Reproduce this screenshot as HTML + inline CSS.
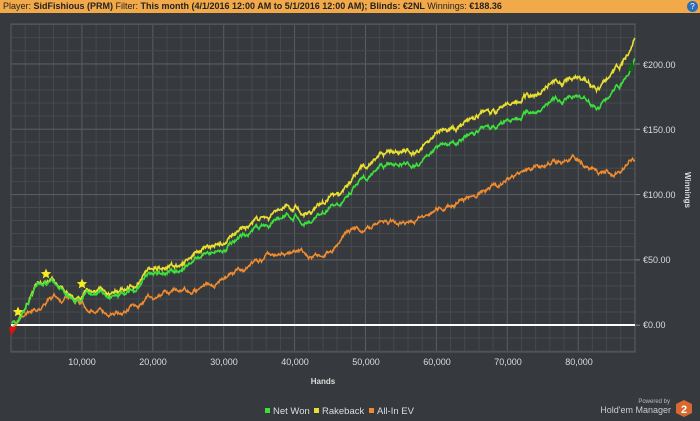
<!DOCTYPE html><html><head><meta charset="utf-8"><style>
body{margin:0;width:700px;height:421px;background:#36393d;overflow:hidden;font-family:"Liberation Sans",sans-serif}
.top{position:absolute;left:0;top:0;width:700px;height:13px;background:#f2a94a;font-size:9px;line-height:13px;color:#222;padding-left:3px;font-weight:bold;white-space:nowrap}
.top span{font-weight:normal}
.q{position:absolute;right:2px;top:1px;width:11px;height:11px;border-radius:50%;background:#2a6fb8;color:#fff;font-size:8px;text-align:center;line-height:11px}
</style></head><body>
<div class="top"><span>Player:</span> SidFishious (PRM) <span>Filter:</span> This month (4/1/2016 12:00 AM to 5/1/2016 12:00 AM); Blinds: €2NL <span>Winnings:</span> €188.36</div>
<div class="q">?</div>
<svg width="700" height="421" style="position:absolute;left:0;top:0" id="s" font-family="Liberation Sans,sans-serif">
<g id="grid"></g>
<g font-size="9" fill="#ddd">
<text x="643" y="68">€200.00</text><text x="643" y="133">€150.00</text><text x="643" y="198">€100.00</text><text x="643" y="263">€50.00</text><text x="643" y="328">€0.00</text>
<text x="82" y="365" text-anchor="middle">10,000</text><text x="153" y="365" text-anchor="middle">20,000</text><text x="224" y="365" text-anchor="middle">30,000</text><text x="295" y="365" text-anchor="middle">40,000</text><text x="366" y="365" text-anchor="middle">50,000</text><text x="437" y="365" text-anchor="middle">60,000</text><text x="508" y="365" text-anchor="middle">70,000</text><text x="579" y="365" text-anchor="middle">80,000</text>
<text x="323" y="384" text-anchor="middle" font-weight="bold" font-size="8">Hands</text>
<text x="685" y="190" font-weight="bold" font-size="8" transform="rotate(90 685 190)" text-anchor="middle">Winnings</text>
<rect x="265" y="408" width="5" height="5" fill="#3ce03c"/><text x="273" y="414" font-size="9.5">Net Won</text>
<rect x="314" y="408" width="5" height="5" fill="#e8e030"/><text x="322" y="414" font-size="9.5">Rakeback</text>
<rect x="369" y="408" width="5" height="5" fill="#f08c30"/><text x="377" y="414" font-size="9.5">All-In EV</text>
<text x="670" y="403" font-size="6" text-anchor="end" fill="#bbb">Powered by</text>
<text x="671" y="413" text-anchor="end" fill="#ccc">Hold'em Manager</text>
</g>
<polygon points="684,400 692,404 692,413 684,417 676,413 676,404" fill="#d8692e"/>
<text x="684" y="413" font-size="11" font-weight="bold" fill="#fff" text-anchor="middle">2</text>
<line x1="11" y1="325" x2="635" y2="325" stroke="#fff" stroke-width="2"/>
<g id="lines"></g>
<polygon points="9,327 17,327 11,336" fill="#e01010"/>
<polygon points="633,72 633,60 627,70" fill="#0a6a10"/>
</svg>
<script>
var g=document.getElementById('grid'),h='';
for(var x=11;x<=636;x+=14.18){var maj=Math.abs(((x-11)/70.9)-Math.round((x-11)/70.9))<0.05;h+='<line x1="'+x+'" y1="24" x2="'+x+'" y2="352" stroke="'+(maj?'#5a5d62':'#474a4e')+'" stroke-width="1"/>';}
for(var y=325;y>=24;y-=13.06){h+='<line x1="11" y1="'+y+'" x2="635" y2="'+y+'" stroke="#474a4e"/>';}
for(var y=325;y<=352;y+=13.06){h+='<line x1="11" y1="'+y+'" x2="635" y2="'+y+'" stroke="#474a4e"/>';}
for(var y=64;y<=330;y+=65.3){h+='<line x1="11" y1="'+y+'" x2="635" y2="'+y+'" stroke="#5a5d62"/><line x1="635" y1="'+y+'" x2="640" y2="'+y+'" stroke="#888"/>';}
h+='<rect x="11" y="24" width="624" height="328" fill="none" stroke="#5a5d62"/>';
g.innerHTML=h;
var seed=7;function r(){seed=(seed*16807)%2147483647;return seed/2147483647;}
function interp(k,x){for(var i=0;i<k.length-1;i++){if(x>=k[i][0]&&x<=k[i+1][0]){var t=(x-k[i][0])/(k[i+1][0]-k[i][0]);return k[i][1]+t*(k[i+1][1]-k[i][1]);}}return k[k.length-1][1];}
var G=[[12,325],[20,318],[30,300],[38,282],[50,285],[65,290],[80,295],[100,290],[120,292],[140,285],[150,275],[170,270],[190,262],[210,250],[230,240],[250,232],[270,222],[290,210],[310,218],[320,212],[340,200],[360,180],[380,170],[400,165],[420,160],[440,150],[460,140],[480,130],[500,128],[520,118],[540,110],[560,100],[575,92],[590,100],[600,105],[615,90],[625,80],[635,62]];
var O=[[12,325],[30,312],[50,295],[70,300],[90,308],[110,312],[130,308],[150,300],[180,292],[210,285],[230,275],[260,262],[290,250],[310,258],[320,255],[340,240],[360,232],[380,228],[400,222],[420,215],[440,210],[460,200],[480,195],[500,185],[520,175],[540,170],[560,165],[575,157],[590,165],[605,176],[620,172],[634,158]];
var pg='',py='',po='',n1=0,n2=0;
for(var x=12;x<=635;x+=0.5){n1+=(r()-0.5)*3.2;n1*=0.96;n2+=(r()-0.5)*3.2;n2*=0.96;
var gy=interp(G,x)+n1,gap=Math.min(22,(x-12)*0.033);
pg+=x.toFixed(1)+','+gy.toFixed(1)+' ';py+=x.toFixed(1)+','+(gy-gap+(r()-0.5)*1.5).toFixed(1)+' ';po+=x.toFixed(1)+','+(interp(O,x)+n2).toFixed(1)+' ';}
function star(cx,cy){var p='';for(var i=0;i<10;i++){var a=Math.PI/5*i-Math.PI/2,rr=i%2?2.5:5.5;p+=(cx+rr*Math.cos(a)).toFixed(1)+','+(cy+rr*Math.sin(a)).toFixed(1)+' ';}return '<polygon points="'+p+'" fill="#f4ee20"/>';}
document.getElementById('lines').innerHTML='<polyline points="'+po+'" fill="none" stroke="#f08c30" stroke-width="1.5"/><polyline points="'+py+'" fill="none" stroke="#e8e030" stroke-width="1.6"/><polyline points="'+pg+'" fill="none" stroke="#3ce03c" stroke-width="1.6"/>'+star(18,312)+star(46,274)+star(82,284);
</script>
</body></html>
